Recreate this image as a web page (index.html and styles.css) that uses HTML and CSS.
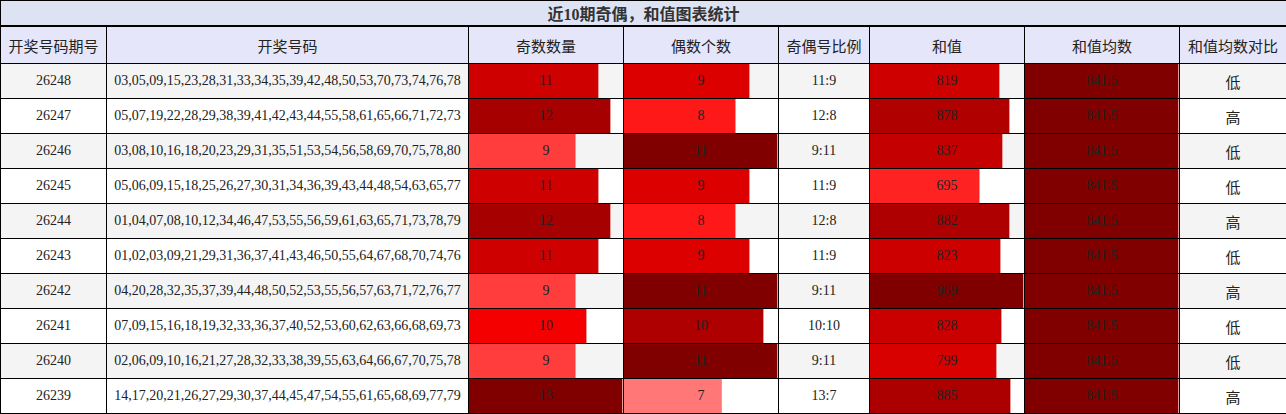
FILE: index.html
```html
<!DOCTYPE html>
<html lang="zh-CN">
<head>
<meta charset="utf-8">
<title>近10期奇偶，和值图表统计</title>
<link rel="stylesheet" href="styles.css">
</head>
<body>
<table class="stats">
  <colgroup>
    <col class="c-issue"><col class="c-nums"><col class="c-bar"><col class="c-bar"><col class="c-ratio"><col class="c-bar"><col class="c-bar"><col class="c-cmp">
  </colgroup>
  <thead>
    <tr class="title-row"><th colspan="8">近10期奇偶，和值图表统计</th></tr>
    <tr class="head-row">
      <th>开奖号码期号</th><th>开奖号码</th><th>奇数数量</th><th>偶数个数</th><th>奇偶号比例</th><th>和值</th><th>和值均数</th><th>和值均数对比</th>
    </tr>
  </thead>
  <tbody>
    <tr><td>26248</td><td>03,05,09,15,23,28,31,33,34,35,39,42,48,50,53,70,73,74,76,78</td><td class="bar" style="--w:84.62%;--c:#ce0000">11</td><td class="bar" style="--w:81.82%;--c:#dc0000">9</td><td>11:9</td><td class="bar" style="--w:84.52%;--c:#cf0000">819</td><td class="bar" style="--w:100%;--c:#800000">841.5</td><td class="cmp">低</td></tr>
    <tr><td>26247</td><td>05,07,19,22,28,29,38,39,41,42,43,44,55,58,61,65,66,71,72,73</td><td class="bar" style="--w:92.31%;--c:#a70000">12</td><td class="bar" style="--w:72.73%;--c:#ff1818">8</td><td>12:8</td><td class="bar" style="--w:90.61%;--c:#b00000">878</td><td class="bar" style="--w:100%;--c:#800000">841.5</td><td class="cmp">高</td></tr>
    <tr><td>26246</td><td>03,08,10,16,18,20,23,29,31,35,51,53,54,56,58,69,70,75,78,80</td><td class="bar" style="--w:69.23%;--c:#ff3d3d">9</td><td class="bar" style="--w:100%;--c:#800000">11</td><td>9:11</td><td class="bar" style="--w:86.38%;--c:#c50000">837</td><td class="bar" style="--w:100%;--c:#800000">841.5</td><td class="cmp">低</td></tr>
    <tr><td>26245</td><td>05,06,09,15,18,25,26,27,30,31,34,36,39,43,44,48,54,63,65,77</td><td class="bar" style="--w:84.62%;--c:#ce0000">11</td><td class="bar" style="--w:81.82%;--c:#dc0000">9</td><td>11:9</td><td class="bar" style="--w:71.72%;--c:#ff2222">695</td><td class="bar" style="--w:100%;--c:#800000">841.5</td><td class="cmp">低</td></tr>
    <tr><td>26244</td><td>01,04,07,08,10,12,34,46,47,53,55,56,59,61,63,65,71,73,78,79</td><td class="bar" style="--w:92.31%;--c:#a70000">12</td><td class="bar" style="--w:72.73%;--c:#ff1818">8</td><td>12:8</td><td class="bar" style="--w:91.02%;--c:#ae0000">882</td><td class="bar" style="--w:100%;--c:#800000">841.5</td><td class="cmp">高</td></tr>
    <tr><td>26243</td><td>01,02,03,09,21,29,31,36,37,41,43,46,50,55,64,67,68,70,74,76</td><td class="bar" style="--w:84.62%;--c:#ce0000">11</td><td class="bar" style="--w:81.82%;--c:#dc0000">9</td><td>11:9</td><td class="bar" style="--w:84.93%;--c:#cd0000">823</td><td class="bar" style="--w:100%;--c:#800000">841.5</td><td class="cmp">低</td></tr>
    <tr><td>26242</td><td>04,20,28,32,35,37,39,44,48,50,52,53,55,56,57,63,71,72,76,77</td><td class="bar" style="--w:69.23%;--c:#ff3d3d">9</td><td class="bar" style="--w:100%;--c:#800000">11</td><td>9:11</td><td class="bar" style="--w:100%;--c:#800000">969</td><td class="bar" style="--w:100%;--c:#800000">841.5</td><td class="cmp">高</td></tr>
    <tr><td>26241</td><td>07,09,15,16,18,19,32,33,36,37,40,52,53,60,62,63,66,68,69,73</td><td class="bar" style="--w:76.92%;--c:#f50000">10</td><td class="bar" style="--w:90.91%;--c:#ae0000">10</td><td>10:10</td><td class="bar" style="--w:85.45%;--c:#ca0000">828</td><td class="bar" style="--w:100%;--c:#800000">841.5</td><td class="cmp">低</td></tr>
    <tr><td>26240</td><td>02,06,09,10,16,21,27,28,32,33,38,39,55,63,64,66,67,70,75,78</td><td class="bar" style="--w:69.23%;--c:#ff3d3d">9</td><td class="bar" style="--w:100%;--c:#800000">11</td><td>9:11</td><td class="bar" style="--w:82.46%;--c:#d90000">799</td><td class="bar" style="--w:100%;--c:#800000">841.5</td><td class="cmp">低</td></tr>
    <tr><td>26239</td><td>14,17,20,21,26,27,29,30,37,44,45,47,54,55,61,65,68,69,77,79</td><td class="bar" style="--w:100%;--c:#800000">13</td><td class="bar" style="--w:63.64%;--c:#ff7777">7</td><td>13:7</td><td class="bar" style="--w:91.33%;--c:#ac0000">885</td><td class="bar" style="--w:100%;--c:#800000">841.5</td><td class="cmp">高</td></tr>
  </tbody>
</table>
</body>
</html>
```
FILE: styles.css
```css
html, body {
  margin: 0;
  padding: 0;
  background: #ffffff;
}
body {
  font-family: "Liberation Serif", "Noto Sans CJK SC", serif;
  color: #222;
}
.stats {
  width: 1286px;
  border-collapse: collapse;
  table-layout: fixed;
}
.c-issue { width: 106px; }
.c-nums { width: 362px; }
.c-bar { width: 155px; }
.c-ratio { width: 91px; }
.c-cmp { width: 107px; }

.stats th, .stats td {
  border: 1px solid #000;
  padding: 0;
  text-align: center;
  vertical-align: middle;
  white-space: nowrap;
  overflow: hidden;
}
.title-row th {
  height: 24px;
  background: #dde3f3;
  color: #333;
  font-size: 16px;
  font-weight: bold;
  border-bottom: 2px solid #000;
}
.head-row th {
  height: 36px;
  background: #e6e6fa;
  color: #222;
  font-size: 15px;
  font-weight: normal;
}
.stats tbody tr {
  height: 35px;
}
.stats tbody tr:nth-child(odd) {
  background: #f4f4f4;
}
.stats tbody tr:nth-child(even) {
  background: #ffffff;
}
.stats td {
  font-size: 14px;
  height: 34px;
}
.stats td.bar {
  background-image: linear-gradient(to right,
    var(--c) 0,
    var(--c) calc(var(--w) - 1px),
    #e79a9a calc(var(--w) - 1px),
    #e79a9a var(--w),
    transparent var(--w));
  background-repeat: no-repeat;
}
.stats td.cmp {
  font-size: 15px;
  color: #222;
}
```
